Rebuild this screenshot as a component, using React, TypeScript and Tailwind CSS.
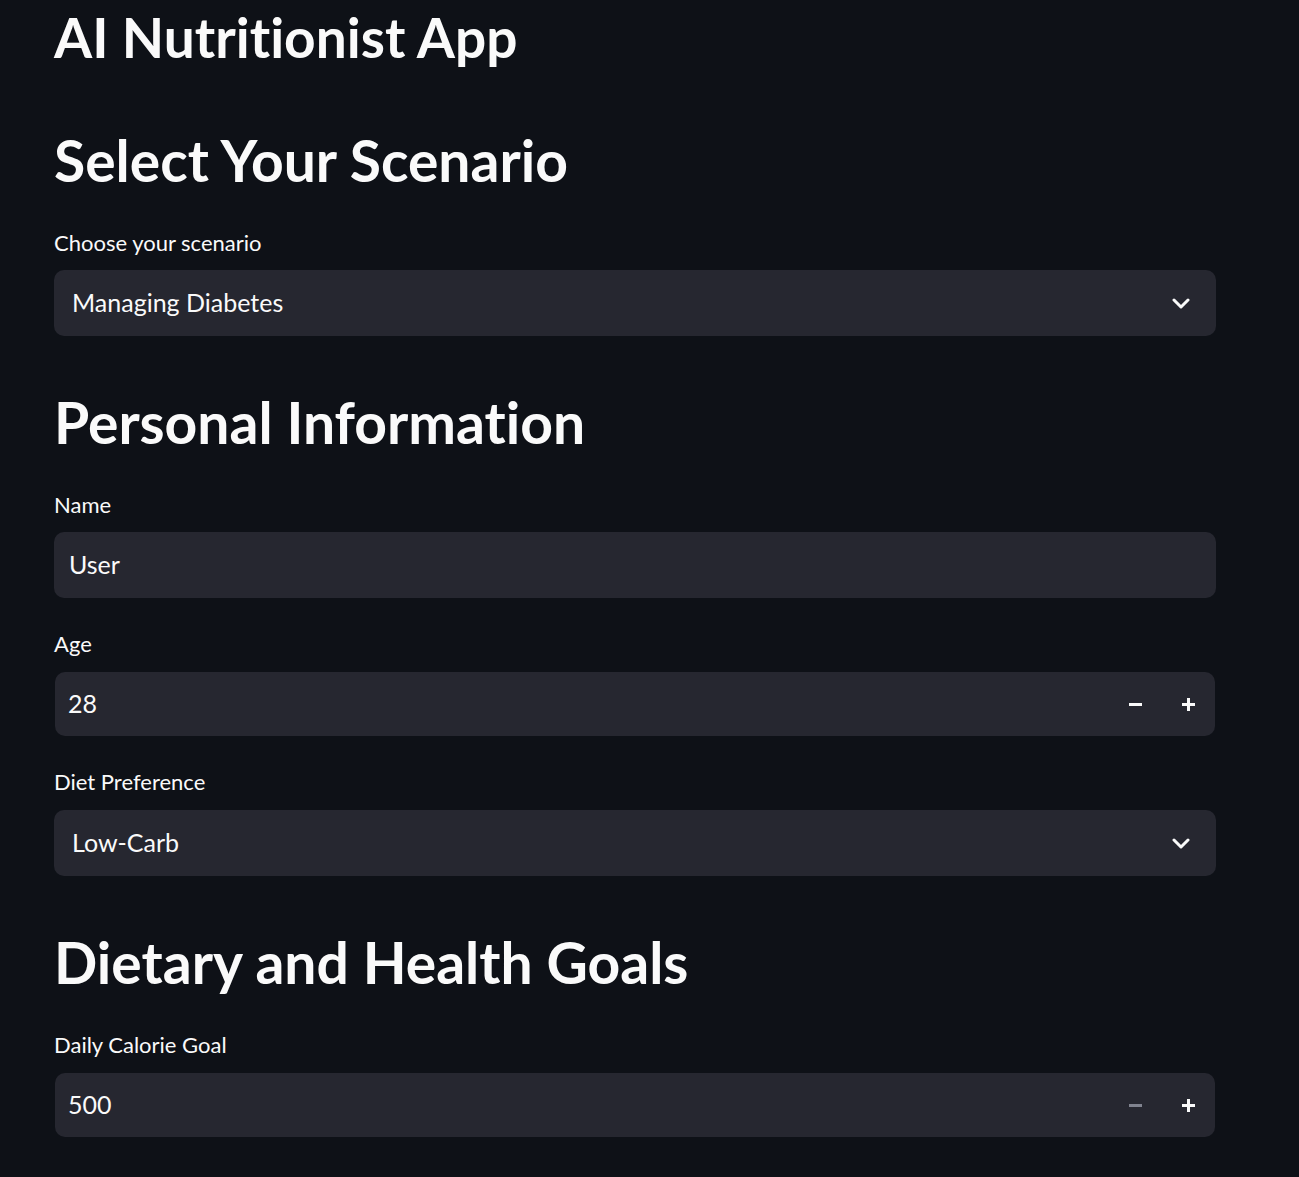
import React from 'react';

const font = { fontFamily: 'Lato, "Liberation Sans", sans-serif' };

const Chevron = () => (
  <svg width="18" height="11" viewBox="0 0 18 11" fill="none">
    <path d="M2 2l7 7 7-7" stroke="#fafafa" strokeWidth="3" strokeLinecap="round" strokeLinejoin="round" />
  </svg>
);

const SelectBox = ({ value }: { value: string }) => (
  <div className="flex h-[66px] w-[1162px] items-center justify-between rounded-[10px] bg-[#262730] pl-[18px] pr-[26px]">
    <span className="mb-[3px] text-[25px] leading-[40px] text-[#fafafa]">{value}</span>
    <Chevron />
  </div>
);

const NumberBox = ({ value, minusDisabled }: { value: string; minusDisabled?: boolean }) => (
  <div className="ml-px flex h-[64px] w-[1160px] items-center rounded-[10px] bg-[#262730] pl-[13px]">
    <span className="mb-[2px] flex-1 text-[25px] leading-[40px] text-[#fafafa]">{value}</span>
    <div className="flex h-full w-[53px] items-center justify-center">
      <div className={`h-[3px] w-[13px] ${minusDisabled ? 'bg-[#80838f]' : 'bg-[#fafafa]'}`} />
    </div>
    <div className="relative flex h-full w-[53px] items-center justify-center">
      <div className="h-[3px] w-[13px] bg-[#fafafa]" />
      <div className="absolute h-[13px] w-[3px] bg-[#fafafa]" />
    </div>
  </div>
);

const Label = ({ children, className = '' }: { children: React.ReactNode; className?: string }) => (
  <div className={`text-[22px] leading-[24px] text-[#fafafa] ${className}`}>{children}</div>
);

const Heading = ({ children, className = '' }: { children: React.ReactNode; className?: string }) => (
  <h2 className={`text-[57px] font-bold leading-[72px] text-[#fafafa] ${className}`}>{children}</h2>
);

export default function App() {
  return (
    <div className="min-h-[1177px] w-full overflow-hidden bg-[#0e1117] [font-variant-ligatures:none]" style={font}>
      <div className="pl-[54px]">
        <h1 className="text-[55px] font-bold leading-[74px] text-[#fafafa]">AI Nutritionist App</h1>

        <Heading className="mt-[50px]">Select Your Scenario</Heading>
        <Label className="mt-[35px]">Choose your scenario</Label>
        <div className="mt-[15px]">
          <SelectBox value="Managing Diabetes" />
        </div>

        <Heading className="mt-[50px]">Personal Information</Heading>
        <Label className="mt-[35px]">Name</Label>
        <div className="mt-[15px] flex h-[66px] w-[1162px] items-center rounded-[10px] bg-[#262730] pl-[15px]">
          <span className="mb-[3px] text-[25px] leading-[40px] text-[#fafafa]">User</span>
        </div>

        <Label className="mt-[34px]">Age</Label>
        <div className="mt-[16px]">
          <NumberBox value="28" />
        </div>

        <Label className="mt-[34px]">Diet Preference</Label>
        <div className="mt-[16px]">
          <SelectBox value="Low-Carb" />
        </div>

        <Heading className="mt-[50px]">Dietary and Health Goals</Heading>
        <Label className="mt-[35px]">Daily Calorie Goal</Label>
        <div className="mt-[16px]">
          <NumberBox value="500" minusDisabled />
        </div>
      </div>
    </div>
  );
}
